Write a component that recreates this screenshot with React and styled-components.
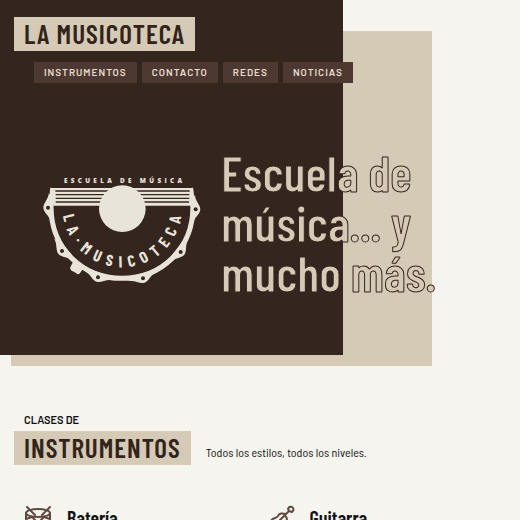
import React from "react";
import styled, { createGlobalStyle } from "styled-components";

const ink = "#35251f";
const sand = "#d5cab6";
const paper = "#f5f4ef";
const cream = "#e9e4d9";

const GlobalStyle = createGlobalStyle`
  *, *::before, *::after { box-sizing: border-box; }
  body {
    margin: 0;
    background: ${paper};
    color: #111;
    font-family: "Barlow", "Roboto", "Liberation Sans", sans-serif;
    font-size: 11px;
  }
  h1, h2, h3, p, ul { margin: 0; padding: 0; }
`;

const condensed = `"Barlow Condensed", "Roboto Condensed", "Liberation Sans", sans-serif`;
const semiCondensed = `"Barlow Semi Condensed", "Barlow", "Roboto", sans-serif`;

const Page = styled.div`
  height: 100vh;
  overflow: hidden;
`;

const Hero = styled.header`
  display: grid;
  grid-template-rows: 366px;
  grid-template-columns: minmax(0, 1fr);
  > * { grid-area: 1 / 1; }
`;

const SandPanel = styled.div`
  width: 81%;
  margin: 31px 0 0 11px;
  background: ${sand};
`;

const DarkPanel = styled.div`
  width: 66%;
  margin-bottom: 11px;
  background: ${ink};
`;

const HeroContent = styled.div`
  display: flex;
  flex-direction: column;
  align-items: flex-start;
  padding: 17px 14px 0;
`;

const Label = styled.span`
  display: inline-block;
  padding: 0 10px 2px;
  background: ${sand};
  color: #33241a;
  font-family: ${condensed};
  font-size: 27px;
  font-weight: 600;
  line-height: 32px;
  letter-spacing: 1px;
  text-decoration: none;
  text-transform: uppercase;
`;

const Nav = styled.nav`
  display: flex;
  gap: 5px;
  margin: 11px 0 0 20px;
`;

const NavLink = styled.a`
  padding: 0 10px 1px;
  background: #4d3932;
  color: #eadccf;
  font-size: 10px;
  font-weight: 600;
  line-height: 20px;
  letter-spacing: 1px;
  text-decoration: none;
  text-transform: uppercase;
`;

const Banner = styled.div`
  display: flex;
  align-items: flex-start;
  gap: 11px;
  margin: 64px 0 0 20px;
`;

const Logo = styled.svg`
  display: block;
  flex: none;
  width: 176px;
  height: 120px;
  margin-top: 23px;
`;

const Slogan = styled.h1`
  max-width: 230px;
  color: ${sand};
  font-family: ${condensed};
  font-size: 50px;
  font-weight: 600;
  line-height: 50px;
  -webkit-text-stroke: 1px ${ink};
`;

const Section = styled.section`
  padding: 47px 11px 0 14px;
`;

const Eyebrow = styled.p`
  padding-left: 10px;
  font-weight: 600;
  line-height: 13px;
  text-transform: uppercase;
`;

const TitleRow = styled.div`
  display: flex;
  align-items: flex-end;
  gap: 15px;
  margin-top: 5px;
`;

const Tagline = styled.p`
  padding-bottom: 5px;
  font-family: ${semiCondensed};
  font-size: 12px;
  font-weight: 400;
  line-height: 15px;
`;

const Cards = styled.ul`
  display: grid;
  grid-template-columns: 1fr 1fr;
  margin: 40px 0 0 10px;
  list-style: none;
`;

const Card = styled.li`
  display: flex;
  gap: 15px;
`;

const CardIcon = styled.svg`
  flex: none;
  width: 28px;
  height: 28px;
`;

const CardTitle = styled.h3`
  padding-top: 2px;
  font-family: ${condensed};
  font-size: 20px;
  font-weight: 600;
  line-height: 22px;
`;

const lugs = [
  [42, 113, 86], [84, 243, 50], [192, 322, 18],
  [327, 325, -18], [440, 246, -52], [485, 118, -86],
];

function SchoolLogo() {
  return (
    <Logo viewBox="0 0 528 360" role="img" aria-label="La Musicoteca, escuela de música">
      <defs>
        <path id="arc" d="M86 113 A 179 179 0 0 0 444 113 V0" />
      </defs>
      <g fill={cream}>
        <path d="M50 54 H476 L470 107 H58 Z" />
        <path
          d="M56 54 L51 112 C52 238 148 325 264 325 C380 325 476 238 477 112 L470 54"
          fill="none" stroke={cream} strokeWidth="15"
        />
        {lugs.map(([x, y, r]) => (
          <path
            key={x}
            transform={`translate(${x} ${y}) rotate(${r})`}
            d="M-42 -5 C-25 -3 -15 13 0 14 C15 13 25 -3 42 -5 L32 -15 H-32 Z"
          />
        ))}
        <path d="M117 276 L108 293 Q110 303 120 305 L131 313 Q137 313 140 307 L150 292 Z" />
      </g>
      <path d="M64 63 H467 M65 74 H466 M65 85 H466 M65 96 H465" stroke={ink} strokeWidth="4" />
      <circle cx="265" cy="116" r="70" fill={cream} />
      <g fill={ink}>
        {lugs.map(([x, y]) => <circle key={x} cx={x} cy={y} r="6" />)}
      </g>
      <text x="90" y="39" fill={cream} fontFamily="Open Sans, sans-serif" fontWeight="800" fontSize="19" letterSpacing="10">
        ESCUELA DE MÚSICA
      </text>
      <text fill={cream} fontFamily="Barlow Condensed, sans-serif" fontWeight="700" fontSize="48" letterSpacing="20">
        <textPath href="#arc" startOffset="24">LA·MUSICOTECA</textPath>
      </text>
    </Logo>
  );
}

function DrumIcon() {
  return (
    <CardIcon viewBox="0 0 28 28" fill="none" stroke="#604a40" strokeWidth="2" strokeLinecap="round" aria-hidden="true">
      <ellipse cx="14" cy="8" rx="12" ry="4" />
      <path d="M2 8 V20 C2 26 26 26 26 20 V8 M3 2 L11 10 M26 2 L18 10 M2 14 L8 12 L14 18 L20 12 L26 14" />
    </CardIcon>
  );
}

function GuitarIcon() {
  return (
    <CardIcon viewBox="0 0 28 28" fill="none" stroke="#604a40" strokeWidth="2" strokeLinecap="round" strokeLinejoin="round" aria-hidden="true">
      <path d="M22 6 L21 4 Q22 1 25 2 Q28 4 25 7 Z M22 6 L13 15" />
      <path d="M18 9 C16 8 12 8 11 11 C10 14 4 12 3 18 C2 24 9 28 13 24 C16 21 14 19 18 17 C21 15 20 12 18 11" />
    </CardIcon>
  );
}

const links = ["Instrumentos", "Contacto", "Redes", "Noticias"];

export default function App() {
  return (
    <Page>
      <GlobalStyle />
      <Hero>
        <SandPanel />
        <DarkPanel />
        <HeroContent>
          <Label as="a" href="#inicio">La Musicoteca</Label>
          <Nav>
            {links.map((name) => (
              <NavLink key={name} href={`#${name.toLowerCase()}`}>{name}</NavLink>
            ))}
          </Nav>
          <Banner>
            <SchoolLogo />
            <Slogan>Escuela de música... y mucho más.</Slogan>
          </Banner>
        </HeroContent>
      </Hero>
      <Section id="instrumentos">
        <Eyebrow>Clases de</Eyebrow>
        <TitleRow>
          <Label as="h2">Instrumentos</Label>
          <Tagline>Todos los estilos, todos los niveles.</Tagline>
        </TitleRow>
        <Cards>
          <Card><DrumIcon /><CardTitle>Batería</CardTitle></Card>
          <Card><GuitarIcon /><CardTitle>Guitarra</CardTitle></Card>
        </Cards>
      </Section>
    </Page>
  );
}
